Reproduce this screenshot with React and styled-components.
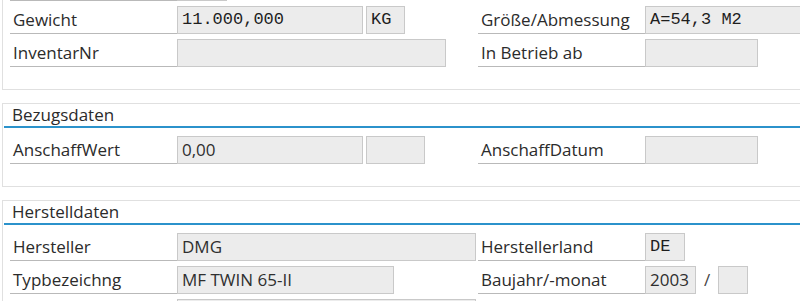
import React from "react";
import styled, { createGlobalStyle } from "styled-components";

const GlobalStyle = createGlobalStyle`
  html, body {
    margin: 0;
    padding: 0;
    background: #ffffff;
    overflow: hidden;
  }
  body {
    font-family: "Open Sans", "Noto Sans", Arial, sans-serif;
    color: #2b2b2b;
  }
`;

const Page = styled.div`
  width: 840px;
  padding-left: 2px;
  display: flex;
  flex-direction: column;
  gap: 13px;
  margin-top: ${({ offset }) => offset || 0}px;
`;

const GroupBox = styled.section`
  border: 1px solid #e0e0e0;
  display: flex;
  flex-direction: column;
  padding-bottom: ${({ bottom }) => bottom || 22}px;
`;

const GroupHeader = styled.div`
  height: 22px;
  border-bottom: 2px solid #2b92cb;
  margin-left: 1px;
  padding-left: 8px;
  font-size: 17px;
  line-height: 22px;
  color: #2b2b2b;
`;

const Rows = styled.div`
  display: flex;
  flex-direction: column;
  gap: 5px;
  padding-left: 7px;
  padding-top: ${({ top }) => top || 0}px;
`;

const Row = styled.div`
  display: grid;
  grid-template-columns: 167px 301px 167px 1fr;
  height: 28px;
`;

const Label = styled.div`
  height: 28px;
  box-sizing: border-box;
  border-bottom: 1px solid #b9b9b9;
  padding-left: 3px;
  font-size: 17px;
  line-height: 27px;
  white-space: nowrap;
  color: #2b2b2b;
`;

const Cell = styled.div`
  display: flex;
  align-items: flex-start;
  gap: ${({ gap }) => gap || 3}px;
`;

const Field = styled.div`
  width: ${({ w }) => w}px;
  height: 28px;
  box-sizing: border-box;
  border: 1px solid #c9c9c9;
  background: #ececec;
  padding-left: 4px;
  font-family: ${({ mono }) =>
    mono ? '"Liberation Mono", "Courier New", monospace' : '"Open Sans", "Noto Sans", Arial, sans-serif'};
  font-size: 17px;
  line-height: 26px;
  color: ${({ mono }) => (mono ? "#1e1e1e" : "#2f2f2f")};
  white-space: nowrap;
  overflow: hidden;
`;

const Slash = styled.span`
  font-size: 17px;
  line-height: 28px;
  color: #444;
`;

export default function App() {
  return (
    <>
      <GlobalStyle />
      <Page offset={-28}>
        <GroupBox bottom={22}>
          <Rows>
            <Row>
              <Label />
              <Cell>
                <Field w={50} />
              </Cell>
            </Row>
            <Row>
              <Label>Gewicht</Label>
              <Cell>
                <Field w={186} mono>11.000,000</Field>
                <Field w={39} mono>KG</Field>
              </Cell>
              <Label>Größe/Abmessung</Label>
              <Cell>
                <Field w={200} mono>A=54,3 M2</Field>
              </Cell>
            </Row>
            <Row>
              <Label>InventarNr</Label>
              <Cell>
                <Field w={269} />
              </Cell>
              <Label>In Betrieb ab</Label>
              <Cell>
                <Field w={113} />
              </Cell>
            </Row>
          </Rows>
        </GroupBox>

        <GroupBox bottom={22}>
          <GroupHeader>Bezugsdaten</GroupHeader>
          <Rows top={8}>
            <Row>
              <Label>AnschaffWert</Label>
              <Cell>
                <Field w={186}>0,00</Field>
                <Field w={59} />
              </Cell>
              <Label>AnschaffDatum</Label>
              <Cell>
                <Field w={113} />
              </Cell>
            </Row>
          </Rows>
        </GroupBox>

        <GroupBox bottom={22}>
          <GroupHeader>Herstelldaten</GroupHeader>
          <Rows top={8}>
            <Row>
              <Label>Hersteller</Label>
              <Cell>
                <Field w={299}>DMG</Field>
              </Cell>
              <Label>Herstellerland</Label>
              <Cell>
                <Field w={40} mono>DE</Field>
              </Cell>
            </Row>
            <Row>
              <Label>Typbezeichng</Label>
              <Cell>
                <Field w={217}>MF TWIN 65-II</Field>
              </Cell>
              <Label>Baujahr/-monat</Label>
              <Cell gap={8}>
                <Field w={51}>2003</Field>
                <Slash>/</Slash>
                <Field w={30} />
              </Cell>
            </Row>
            <Row>
              <Label />
              <Cell>
                <Field w={299} />
              </Cell>
            </Row>
          </Rows>
        </GroupBox>
      </Page>
    </>
  );
}
